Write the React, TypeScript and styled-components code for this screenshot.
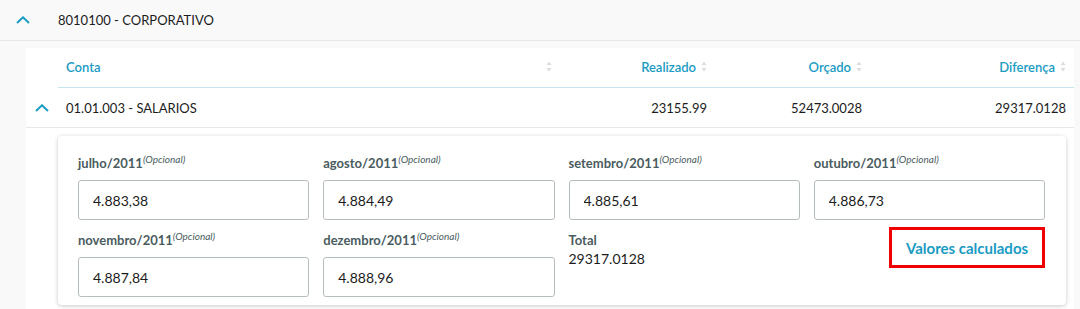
import styled, { createGlobalStyle } from "styled-components";

const GlobalStyle = createGlobalStyle`
  body {
    margin: 0;
    background: #f9f9f9;
    font-family: Lato, "Open Sans", sans-serif;
    color: #1c1c1c;
  }
`;

const BLUE = "#1a9bc4";

type Coluna = { label: string; align: "left" | "right" };

const colunas: Coluna[] = [
  { label: "Conta", align: "left" },
  { label: "Realizado", align: "right" },
  { label: "Orçado", align: "right" },
  { label: "Diferença", align: "right" },
];

const meses = [
  { mes: "julho/2011", valor: "4.883,38" },
  { mes: "agosto/2011", valor: "4.884,49" },
  { mes: "setembro/2011", valor: "4.885,61" },
  { mes: "outubro/2011", valor: "4.886,73" },
  { mes: "novembro/2011", valor: "4.887,84" },
  { mes: "dezembro/2011", valor: "4.888,96" },
];

function Chevron() {
  return (
    <svg width="14" height="8" viewBox="0 0 14 8">
      <path d="M1 7 L7 1.3 L13 7" fill="none" stroke={BLUE} strokeWidth="2" />
    </svg>
  );
}

function SortIcon() {
  return (
    <svg width="6" height="11" viewBox="0 0 6 11">
      <path d="M3 0.5 L5.5 4 L0.5 4 Z" fill="#dcdcdc" />
      <path d="M3 10.5 L5.5 7 L0.5 7 Z" fill="#dcdcdc" />
    </svg>
  );
}

export default function App() {
  return (
    <>
      <GlobalStyle />
      <GroupRow>
        <ToggleCell>
          <Chevron />
        </ToggleCell>
        <GroupTitle>8010100 - CORPORATIVO</GroupTitle>
      </GroupRow>

      <Panel>
        <Table>
          <span />
          {colunas.map((c) => (
            <HeadCell key={c.label} $align={c.align}>
              <span>{c.label}</span>
              <SortIcon />
            </HeadCell>
          ))}

          <RowToggle>
            <Chevron />
          </RowToggle>
          <Cell $align="left">01.01.003 - SALARIOS</Cell>
          <Cell $align="right">23155.99</Cell>
          <Cell $align="right">52473.0028</Cell>
          <Cell $align="right">29317.0128</Cell>
        </Table>

        <Detail>
          <Card>
            {meses.map((m) => (
              <Field key={m.mes}>
                <Label>
                  {m.mes}
                  <Optional>(Opcional)</Optional>
                </Label>
                <Input defaultValue={m.valor} />
              </Field>
            ))}
            <Total>
              <Label as="div">Total</Label>
              <TotalValue>29317.0128</TotalValue>
            </Total>
            <ButtonCell>
              <LinkButton>Valores calculados</LinkButton>
            </ButtonCell>
          </Card>
        </Detail>
      </Panel>
    </>
  );
}

const GroupRow = styled.div`
  display: flex;
  align-items: center;
  height: 40px;
  border-bottom: 1px solid #e6e6e6;
`;

const ToggleCell = styled.div`
  width: 58px;
  padding-left: 16px;
  box-sizing: border-box;
  display: flex;
  align-items: center;
`;

const GroupTitle = styled.div`
  font-size: 13px;
  color: #1c1c1c;
`;

const Panel = styled.div`
  margin: 7px 6px 0 26px;
  background: #fff;
  padding-bottom: 8px;
`;

const Table = styled.div`
  display: grid;
  grid-template-columns: 32px 1fr 155px 155px 204px;
`;

const HeadCell = styled.div<{ $align: "left" | "right" }>`
  height: 40px;
  display: flex;
  align-items: center;
  justify-content: ${(p) => (p.$align === "right" ? "flex-end" : "space-between")};
  gap: 5px;
  padding: 0 8px 2px;
  box-sizing: border-box;
  font-size: 13px;
  font-weight: 600;
  color: ${BLUE};
  border-bottom: 1px solid #c8e6f0;
`;

const RowToggle = styled.div`
  height: 39px;
  display: flex;
  align-items: center;
  padding-left: 9px;
  border-bottom: 1px solid #e8e8e8;
`;

const Cell = styled.div<{ $align: "left" | "right" }>`
  height: 39px;
  display: flex;
  align-items: center;
  justify-content: ${(p) => (p.$align === "right" ? "flex-end" : "flex-start")};
  padding: 0 8px;
  font-size: 13px;
  border-bottom: 1px solid #e8e8e8;
`;

const Detail = styled.div`
  padding: 8px 8px 0 32px;
`;

const Card = styled.div`
  display: grid;
  grid-template-columns: repeat(4, 1fr);
  column-gap: 14px;
  row-gap: 10px;
  padding: 17px 21px 8px 20px;
  border-radius: 4px;
  background: #fff;
  box-shadow: 0 1px 4px rgba(0, 0, 0, 0.22);
`;

const Field = styled.div`
  display: flex;
  flex-direction: column;
`;

const Label = styled.label`
  display: block;
  height: 20px;
  margin-bottom: 7px;
  font-size: 13px;
  font-weight: 700;
  color: #4a5c60;
  line-height: 20px;
`;

const Optional = styled.span`
  position: relative;
  top: -5px;
  font-size: 10px;
  font-weight: 400;
  font-style: italic;
`;

const Input = styled.input`
  box-sizing: border-box;
  width: 100%;
  height: 40px;
  padding: 0 14px;
  border: 1px solid #b6bdbf;
  border-radius: 3px;
  font-family: inherit;
  font-size: 14px;
  color: #1c1c1c;
`;

const Total = styled.div`
  display: flex;
  flex-direction: column;
`;

const TotalValue = styled.div`
  margin-top: -7px;
  font-size: 14px;
  color: #1c1c1c;
`;

const ButtonCell = styled.div`
  display: flex;
  justify-content: flex-end;
`;

const LinkButton = styled.button`
  box-sizing: border-box;
  width: 156px;
  height: 41px;
  margin-top: -3px;
  background: #fff;
  border: 3px solid #f00000;
  font-family: inherit;
  font-size: 15px;
  font-weight: 700;
  color: ${BLUE};
`;
